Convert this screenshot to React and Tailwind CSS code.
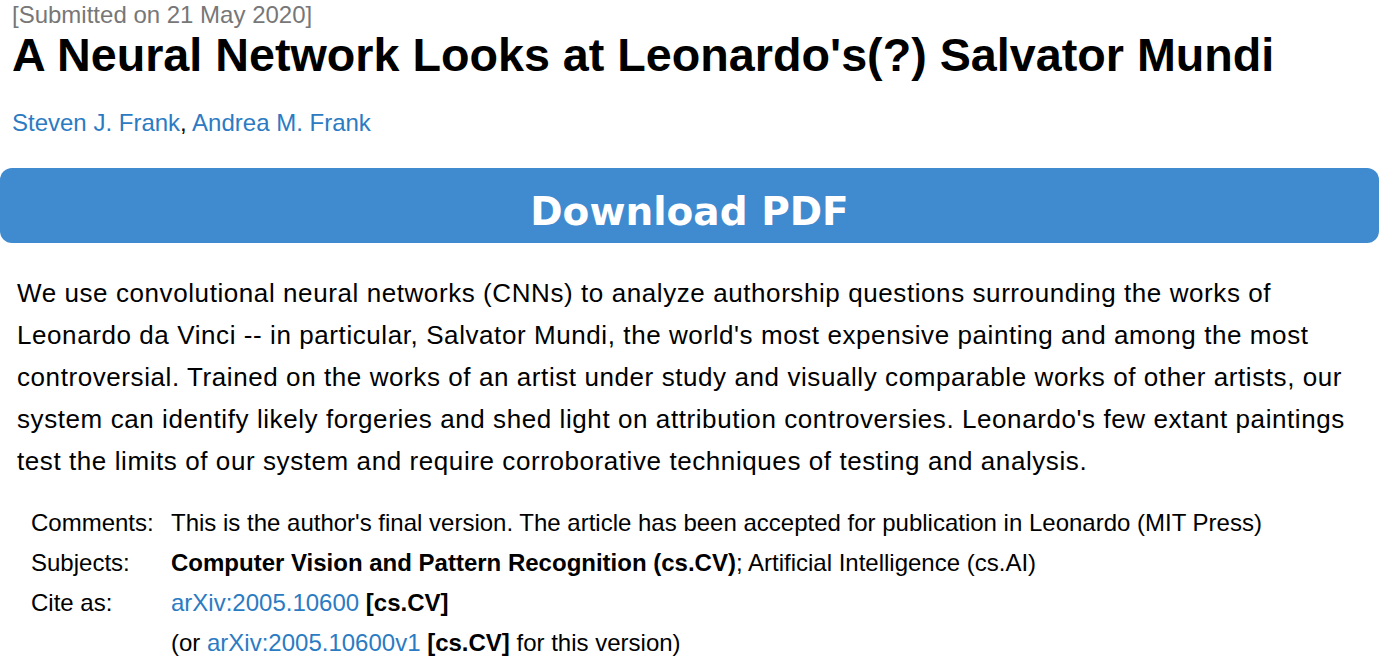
export default function App() {
  const sans = { fontFamily: '"Liberation Sans", Arial, sans-serif' };
  return (
    <div className="w-[1379px] h-[670px] overflow-hidden bg-white text-black" style={sans}>
      <div className="px-[12px] pt-[1px]">
        <div className="text-[24px] leading-[28px] text-[#777777]">[Submitted on 21 May 2020]</div>
        <h1 className="text-[46.7px] leading-[52px] font-bold">A Neural Network Looks at Leonardo's(?) Salvator Mundi</h1>
        <div className="text-[24px] leading-[28px] mt-[28px]">
          <a className="text-[#2b7bc3]">Steven J. Frank</a>, <a className="text-[#2b7bc3]">Andrea M. Frank</a>
        </div>
      </div>
      <div className="mt-[31px] h-[75px] w-[1379px] rounded-[12px] bg-[#408bd0] flex items-center justify-center pt-[11px]">
        <span className="text-white font-bold text-[39px] leading-[45px]" style={{ fontFamily: '"DejaVu Sans", Verdana, sans-serif' }}>Download PDF</span>
      </div>
      <p className="pl-[17px] pr-[22px] mt-[29px] text-[26px] leading-[42px] tracking-[0.58px]">
        We use convolutional neural networks (CNNs) to analyze authorship questions surrounding the works of Leonardo da Vinci -- in particular, Salvator Mundi, the world's most expensive painting and among the most controversial. Trained on the works of an artist under study and visually comparable works of other artists, our system can identify likely forgeries and shed light on attribution controversies. Leonardo's few extant paintings test the limits of our system and require corroborative techniques of testing and analysis.
      </p>
      <div className="mt-[21px] pl-[31px] text-[24px] leading-[40px] grid grid-cols-[140px_1fr]">
        <div>Comments:</div>
        <div>This is the author's final version. The article has been accepted for publication in Leonardo (MIT Press)</div>
        <div>Subjects:</div>
        <div><span className="font-bold">Computer Vision and Pattern Recognition (cs.CV)</span>; Artificial Intelligence (cs.AI)</div>
        <div>Cite as:</div>
        <div><a className="text-[#2b7bc3]">arXiv:2005.10600</a> <span className="font-bold">[cs.CV]</span></div>
        <div></div>
        <div>(or <a className="text-[#2b7bc3]">arXiv:2005.10600v1</a> <span className="font-bold">[cs.CV]</span> for this version)</div>
      </div>
    </div>
  );
}
